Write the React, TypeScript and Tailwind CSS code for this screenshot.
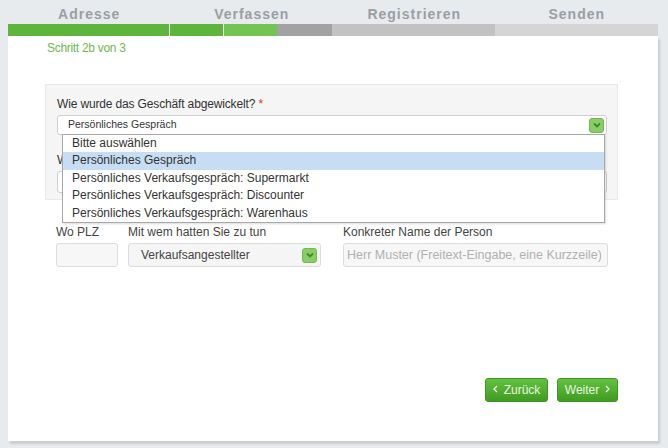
import React from "react";

const steps = ["Adresse", "Verfassen", "Registrieren", "Senden"];

const options = [
  "Bitte auswählen",
  "Persönliches Gespräch",
  "Persönliches Verkaufsgespräch: Supermarkt",
  "Persönliches Verkaufsgespräch: Discounter",
  "Persönliches Verkaufsgespräch: Warenhaus",
];

function ChevronBox() {
  return (
    <div className="w-[15px] h-[15px] rounded-[3px] bg-[#88cd66] border border-[#72b94f] flex items-center justify-center">
      <svg width="8" height="6" viewBox="0 0 8 6">
        <path d="M1 1.5 L4 4.5 L7 1.5" fill="none" stroke="#3f8a26" strokeWidth="1.8" />
      </svg>
    </div>
  );
}

function Arrow({ dir }: { dir: "left" | "right" }) {
  return (
    <svg width="5" height="8" viewBox="0 0 5 8" className="mb-[3px]">
      <path
        d={dir === "left" ? "M4 1 L1 4 L4 7" : "M1 1 L4 4 L1 7"}
        fill="none"
        stroke="#ffffff"
        strokeWidth="1.3"
      />
    </svg>
  );
}

export default function App() {
  return (
    <div
      className="relative w-[668px] h-[448px] bg-[#e7ebee] overflow-hidden"
      style={{ fontFamily: '"Liberation Sans", Arial, sans-serif' }}
    >
      {/* Step header */}
      <div className="w-[650px] ml-[8px] grid grid-cols-4 h-[24px] items-center">
        {steps.map((s) => (
          <div key={s} className="text-center text-[14px] font-bold tracking-[1px] text-[#9a9ea3] leading-none pt-[3px]">
            {s}
          </div>
        ))}
      </div>

      {/* Progress bar */}
      <div className="w-[650px] ml-[8px] h-[12px] flex">
        <div className="w-[161px] bg-[#5eb53e]" />
        <div className="w-[1px] bg-white" />
        <div className="w-[53px] bg-[#5eb53e]" />
        <div className="w-[1px] bg-white" />
        <div className="w-[53px] bg-[#72c553]" />
        <div className="w-[55px] bg-[#a2a2a2]" />
        <div className="w-[163px] bg-[#c2c2c2]" />
        <div className="flex-1 bg-[#d5d5d5]" />
      </div>

      {/* Card */}
      <div className="w-[650px] ml-[8px] h-[405px] bg-white shadow-[2px_3px_2px_rgba(0,0,0,0.13)] flex flex-col">
        <div className="pl-[39px] pt-[5px] text-[12px] leading-[15px] text-[#71b84f] tracking-[-0.3px]">Schritt 2b von 3</div>

        {/* Gray form box */}
        <div className="ml-[37px] mt-[28px] w-[573px] h-[116px] bg-[#f5f5f5] border border-[#e9e9e9] px-[11px] pt-[11px]">
          <div className="text-[12px] text-[#333] leading-[16px] tracking-[-0.15px]">
            Wie wurde das Geschäft abgewickelt? <span className="text-[#e0322f]">*</span>
          </div>
          <div className="mt-[3px] w-[550px] h-[20px] bg-white border border-[#cfcfcf] rounded-[3px] flex items-center justify-between pl-[10px] pr-[2px]">
            <span className="text-[10.5px] text-[#333]">Persönliches Gespräch</span>
            <ChevronBox />
          </div>
          <div className="mt-[17px] text-[12px] text-[#333] leading-[16px]">Wo hat das Gespräch stattgefunden?</div>
          <div className="mt-[3px] w-[550px] h-[22px] bg-white border border-[#cfcfcf] rounded-[3px]" />
        </div>

        {/* Row of fields */}
        <div className="flex ml-[48px] mt-[25px] gap-[10px]">
          <div className="flex flex-col gap-[4px]">
            <span className="text-[12px] text-[#444] leading-[14px]">Wo PLZ</span>
            <div className="w-[62px] h-[24px] bg-[#f7f7f7] border border-[#dcdcdc] rounded-[3px]" />
          </div>
          <div className="flex flex-col gap-[4px]">
            <span className="text-[12px] text-[#444] leading-[14px]">Mit wem hatten Sie zu tun</span>
            <div className="w-[193px] h-[24px] bg-[#f5f5f5] border border-[#dcdcdc] rounded-[3px] flex items-center justify-between pl-[12px] pr-[3px]">
              <span className="text-[12px] text-[#444]">Verkaufsangestellter</span>
              <ChevronBox />
            </div>
          </div>
          <div className="flex flex-col gap-[4px] ml-[12px]">
            <span className="text-[12px] text-[#444] leading-[14px]">Konkreter Name der Person</span>
            <div className="w-[265px] h-[24px] bg-[#f7f7f7] border border-[#dcdcdc] rounded-[3px] flex items-center pl-[3px]">
              <span className="text-[12.5px] text-[#b0b0b0]">Herr Muster (Freitext-Eingabe, eine Kurzzeile)</span>
            </div>
          </div>
        </div>

        {/* Buttons */}
        <div className="flex justify-end gap-[9px] mr-[40px] mt-[111px]">
          <button className="w-[63px] h-[24px] rounded-[3px] bg-gradient-to-b from-[#63c140] to-[#3f9c20] border border-[#3f9622] text-white text-[12px] flex items-center justify-center gap-[6px]">
            <Arrow dir="left" />
            <span className="text-[#e8f6e0]">Zurück</span>
          </button>
          <button className="w-[61px] h-[24px] rounded-[3px] bg-gradient-to-b from-[#63c140] to-[#3f9c20] border border-[#3f9622] text-white text-[12px] flex items-center justify-center gap-[6px]">
            <span className="text-[#e8f6e0]">Weiter</span>
            <Arrow dir="right" />
          </button>
        </div>
      </div>

      {/* Open dropdown list */}
      <div className="absolute left-[62px] top-[134px] w-[543px] bg-white border border-[#a9a9a9] shadow-[1px_1px_2px_rgba(0,0,0,0.15)]">
        {options.map((o, i) => (
          <div
            key={o}
            className={`h-[17.4px] pl-[9px] text-[12px] leading-[17.4px] text-[#333] ${i === 1 ? "bg-[#c6ddf3]" : ""}`}
          >
            {o}
          </div>
        ))}
      </div>
    </div>
  );
}
